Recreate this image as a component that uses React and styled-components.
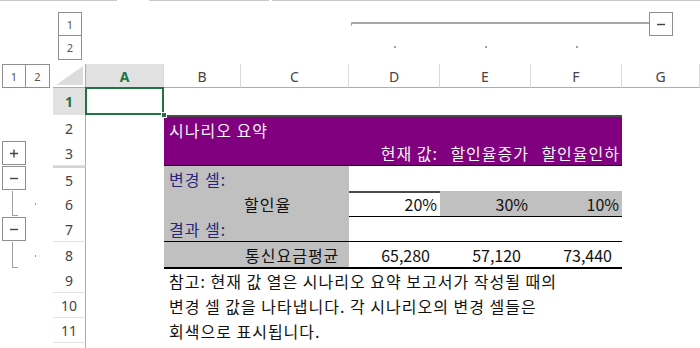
import React from 'react';
import styled, { createGlobalStyle } from 'styled-components';

const COLS = '53px 33px 78px 77px 108px 91px 91px 91px 1fr';
const KR = '"Noto Sans CJK KR", "Noto Sans", sans-serif';
const UI = '"Noto Sans", "Open Sans", sans-serif';

const PURPLE = '#800080';
const GRAY = '#c0c0c0';
const GREEN = '#217346';

const GlobalStyle = createGlobalStyle`
  html, body { margin: 0; padding: 0; background: #fff; }
  body { font-family: ${KR}; }
  *, *::before, *::after { box-sizing: border-box; }
`;

const Screen = styled.div`
  width: 700px;
  height: 348px;
  overflow: hidden;
  display: flex;
  flex-direction: column;
  background: #fff;
`;

const TopStrip = styled.div`
  display: flex;
  height: 1px;
  flex: none;
`;

const StripSegment = styled.div`
  flex: ${p => (p.$w ? `0 0 ${p.$w}px` : '1')};
  margin-left: ${p => p.$gap || 0}px;
  border-bottom: 1px solid #c8c8c8;
`;

const OutlineBand = styled.div`
  display: grid;
  grid-template-columns: ${COLS};
  grid-template-rows: 24px 24px;
  padding: 11px 0 4px;
  flex: none;
`;

const LevelButton = styled.div`
  grid-column: ${p => p.$col || 'auto'};
  grid-row: ${p => p.$row || 'auto'};
  width: 24px;
  height: 24px;
  margin-left: ${p => p.$ml || 0}px;
  border: 1px solid #8f8f8f;
  border-top-width: ${p => (p.$joinTop ? 0 : 1)}px;
  border-left-width: ${p => (p.$joinLeft ? 0 : 1)}px;
  background: #fff;
  display: flex;
  align-items: center;
  justify-content: center;
  font-family: ${UI};
  font-size: 11px;
  color: #555;
  flex: none;
`;

const OutlineBar = styled.div`
  grid-column: 6 / 10;
  grid-row: 1;
  display: flex;
  align-items: flex-start;
  padding: 0 27px 0 2px;
`;

const BarLine = styled.div`
  flex: 1;
  height: 4px;
  margin-top: 10px;
  border-top: 2px solid #a8a8a8;
  border-left: 1px solid #a8a8a8;
`;

const ToggleButton = styled.div`
  width: 24px;
  height: 24px;
  flex: none;
  margin-top: ${p => p.$mt || 0}px;
  border: 1px solid #8f8f8f;
  background: #fff;
  display: flex;
  align-items: center;
  justify-content: center;
`;

const DotSlot = styled.div`
  grid-column: ${p => p.$col};
  grid-row: 2;
  display: flex;
  justify-content: center;
  align-items: flex-start;
  padding-top: 10px;
`;

const Dot = styled.span`
  display: block;
  width: 2px;
  height: 2px;
  background: #a0a0a0;
`;

const Sheet = styled.div`
  display: flex;
  flex-direction: column;
  flex: none;
`;

const SheetRow = styled.div`
  display: grid;
  grid-template-columns: ${COLS};
  height: ${p => p.$h}px;
  flex: none;
`;

const Gutter = styled.div`
  grid-column: 1;
  grid-row: 1;
  display: flex;
  align-items: ${p => (p.$stretch ? 'stretch' : 'flex-start')};
  padding-left: 2px;
`;

const Bracket = styled.div`
  width: 6px;
  margin-left: 10px;
  margin-bottom: 1px;
  border-left: 1px solid #a0a0a0;
  border-bottom: 1px solid #a0a0a0;
  flex: none;
`;

const GutterDot = styled.span`
  align-self: center;
  width: 1px;
  height: 2px;
  background: #9a9a9a;
  margin-left: 17px;
`;

const Corner = styled.div`
  grid-column: 2;
  grid-row: 1;
  border-right: 1px solid #acacac;
  border-bottom: 1px solid #acacac;
  display: flex;
  align-items: flex-end;
  justify-content: flex-end;
  padding: 0 2px 2px 0;
`;

const ColHeader = styled.div`
  grid-row: 1;
  border-right: 1px solid #dadada;
  border-bottom: 1px solid #acacac;
  background: ${p => (p.$active ? '#e1e1e1' : '#fff')};
  color: ${p => (p.$active ? GREEN : '#444')};
  font-weight: ${p => (p.$active ? 700 : 400)};
  font-family: ${UI};
  font-size: 14px;
  display: flex;
  align-items: center;
  justify-content: center;
  padding-top: 1px;
`;

const RowHeader = styled.div`
  grid-column: 2;
  grid-row: 1;
  border-right: 1px solid #acacac;
  border-bottom: 1px solid #e3e3e3;
  border-top: ${p => (p.$hiddenAbove ? '2px solid #d4d4d4' : 'none')};
  background: ${p => (p.$active ? '#e1e1e1' : '#fff')};
  color: ${p => (p.$active ? GREEN : '#444')};
  font-weight: ${p => (p.$active ? 700 : 400)};
  font-family: ${UI};
  font-size: 14px;
  display: flex;
  align-items: center;
  justify-content: center;
  padding-top: 1px;
`;

const Cell = styled.div`
  grid-column: ${p => p.$col};
  grid-row: 1;
  display: flex;
  align-items: center;
  justify-content: ${p => (p.$align === 'right' ? 'flex-end' : 'flex-start')};
  padding: 1px ${p => (p.$pr ?? 3)}px 0 ${p => (p.$pl ?? 4)}px;
  background: ${p => p.$bg || 'transparent'};
  color: ${p => p.$color || '#111'};
  border-top: ${p => p.$top || 'none'};
  border-bottom: ${p => p.$bottom || 'none'};
  font-family: ${KR};
  font-size: 16px;
  letter-spacing: ${p => (p.$num ? '0' : '1px')};
  white-space: nowrap;
  overflow: visible;
`;

const ActiveCell = styled.div`
  grid-column: 3;
  grid-row: 1;
  position: relative;
  z-index: 2;
  &::before {
    content: '';
    position: absolute;
    top: -1px;
    left: -1px;
    right: 0;
    bottom: 0;
    border: 2px solid ${GREEN};
  }
`;

const FillHandle = styled.span`
  position: absolute;
  right: -3px;
  bottom: -3px;
  width: 6px;
  height: 6px;
  background: ${GREEN};
  border: 1px solid #fff;
`;

const MinusIcon = () => (
  <svg width="12" height="12" viewBox="0 0 12 12">
    <path d="M2 6.5h8" stroke="#444" strokeWidth="1.4" />
  </svg>
);

const PlusIcon = () => (
  <svg width="12" height="12" viewBox="0 0 12 12">
    <path d="M2 6.5h8M6 2.5v8" stroke="#444" strokeWidth="1.4" />
  </svg>
);

const CornerTriangle = () => (
  <svg width="27" height="19" viewBox="0 0 27 19">
    <polygon points="27,0 27,19 0,19" fill="#dcdcdc" />
  </svg>
);

const LINE_DARK = '2px solid #4a4a4a';
const LINE_BLACK = '1px solid #000';

export default function App() {
  return (
    <Screen>
      <GlobalStyle />
      <TopStrip>
        <StripSegment $w={117} />
        <StripSegment $w={120} $gap={32} />
        <StripSegment $gap={3} />
      </TopStrip>

      <OutlineBand>
        <LevelButton $col="2" $row="1" $ml={5}>1</LevelButton>
        <LevelButton $col="2" $row="2" $ml={5} $joinTop>2</LevelButton>
        <OutlineBar>
          <BarLine />
          <ToggleButton><MinusIcon /></ToggleButton>
        </OutlineBar>
        <DotSlot $col="6"><Dot /></DotSlot>
        <DotSlot $col="7"><Dot /></DotSlot>
        <DotSlot $col="8"><Dot /></DotSlot>
      </OutlineBand>

      <Sheet>
        <SheetRow $h={24}>
          <Gutter>
            <LevelButton>1</LevelButton>
            <LevelButton $joinLeft>2</LevelButton>
          </Gutter>
          <Corner><CornerTriangle /></Corner>
          <ColHeader $active>A</ColHeader>
          <ColHeader>B</ColHeader>
          <ColHeader>C</ColHeader>
          <ColHeader>D</ColHeader>
          <ColHeader>E</ColHeader>
          <ColHeader>F</ColHeader>
          <ColHeader>G</ColHeader>
        </SheetRow>

        <SheetRow $h={27}>
          <Gutter />
          <RowHeader $active>1</RowHeader>
          <ActiveCell><FillHandle /></ActiveCell>
        </SheetRow>

        <SheetRow $h={25}>
          <Gutter />
          <RowHeader>2</RowHeader>
          <Cell $col="4 / 9" $bg={PURPLE} $color="#f4f4f4" $top={LINE_DARK} $pl={5}>시나리오 요약</Cell>
        </SheetRow>

        <SheetRow $h={26}>
          <Gutter><ToggleButton $mt={1}><PlusIcon /></ToggleButton></Gutter>
          <RowHeader>3</RowHeader>
          <Cell $col="4 / 6" $bg={PURPLE} $bottom={LINE_BLACK} />
          <Cell $col="6" $bg={PURPLE} $color="#f4f4f4" $align="right" $pr={2} $bottom={LINE_BLACK}>현재 값:</Cell>
          <Cell $col="7" $bg={PURPLE} $color="#f4f4f4" $align="right" $pr={2} $bottom={LINE_BLACK}>할인율증가</Cell>
          <Cell $col="8" $bg={PURPLE} $color="#f4f4f4" $align="right" $pr={2} $bottom={LINE_BLACK}>할인율인하</Cell>
        </SheetRow>

        <SheetRow $h={25}>
          <Gutter><ToggleButton><MinusIcon /></ToggleButton></Gutter>
          <RowHeader $hiddenAbove>5</RowHeader>
          <Cell $col="4 / 6" $bg={GRAY} $color="#26267a" $bottom={LINE_DARK} $pl={5}>변경 셀:</Cell>
          <Cell $col="6 / 9" $bottom={LINE_DARK} />
        </SheetRow>

        <SheetRow $h={25}>
          <Gutter $stretch><Bracket /><GutterDot /></Gutter>
          <RowHeader>6</RowHeader>
          <Cell $col="4" $bg={GRAY} $bottom={LINE_BLACK} />
          <Cell $col="5" $bg={GRAY} $bottom={LINE_BLACK} $pl={3}>할인율</Cell>
          <Cell $col="6" $num $align="right" $bottom={LINE_BLACK}>20%</Cell>
          <Cell $col="7" $num $bg={GRAY} $align="right" $bottom={LINE_BLACK}>30%</Cell>
          <Cell $col="8" $num $bg={GRAY} $align="right" $bottom={LINE_BLACK}>10%</Cell>
        </SheetRow>

        <SheetRow $h={26}>
          <Gutter><ToggleButton $mt={1}><MinusIcon /></ToggleButton></Gutter>
          <RowHeader>7</RowHeader>
          <Cell $col="4 / 6" $bg={GRAY} $color="#26267a" $bottom={LINE_BLACK} $pl={5}>결과 셀:</Cell>
          <Cell $col="6 / 9" $bottom={LINE_BLACK} />
        </SheetRow>

        <SheetRow $h={25}>
          <Gutter $stretch><Bracket /><GutterDot /></Gutter>
          <RowHeader>8</RowHeader>
          <Cell $col="4" $bg={GRAY} $bottom="2px solid #000" />
          <Cell $col="5" $bg={GRAY} $bottom="2px solid #000" $pl={4}>통신요금평균</Cell>
          <Cell $col="6" $num $align="right" $pr={10} $bottom="2px solid #000">65,280</Cell>
          <Cell $col="7" $num $align="right" $pr={10} $bottom="2px solid #000">57,120</Cell>
          <Cell $col="8" $num $align="right" $pr={10} $bottom="2px solid #000">73,440</Cell>
        </SheetRow>

        <SheetRow $h={26}>
          <Gutter />
          <RowHeader>9</RowHeader>
          <Cell $col="4 / 10" $pl={5}>참고: 현재 값 열은 시나리오 요약 보고서가 작성될 때의</Cell>
        </SheetRow>

        <SheetRow $h={25}>
          <Gutter />
          <RowHeader>10</RowHeader>
          <Cell $col="4 / 10" $pl={5}>변경 셀 값을 나타냅니다. 각 시나리오의 변경 셀들은</Cell>
        </SheetRow>

        <SheetRow $h={25}>
          <Gutter />
          <RowHeader>11</RowHeader>
          <Cell $col="4 / 10" $pl={5}>회색으로 표시됩니다.</Cell>
        </SheetRow>

        <SheetRow $h={25}>
          <Gutter />
          <RowHeader />
        </SheetRow>
      </Sheet>
    </Screen>
  );
}
